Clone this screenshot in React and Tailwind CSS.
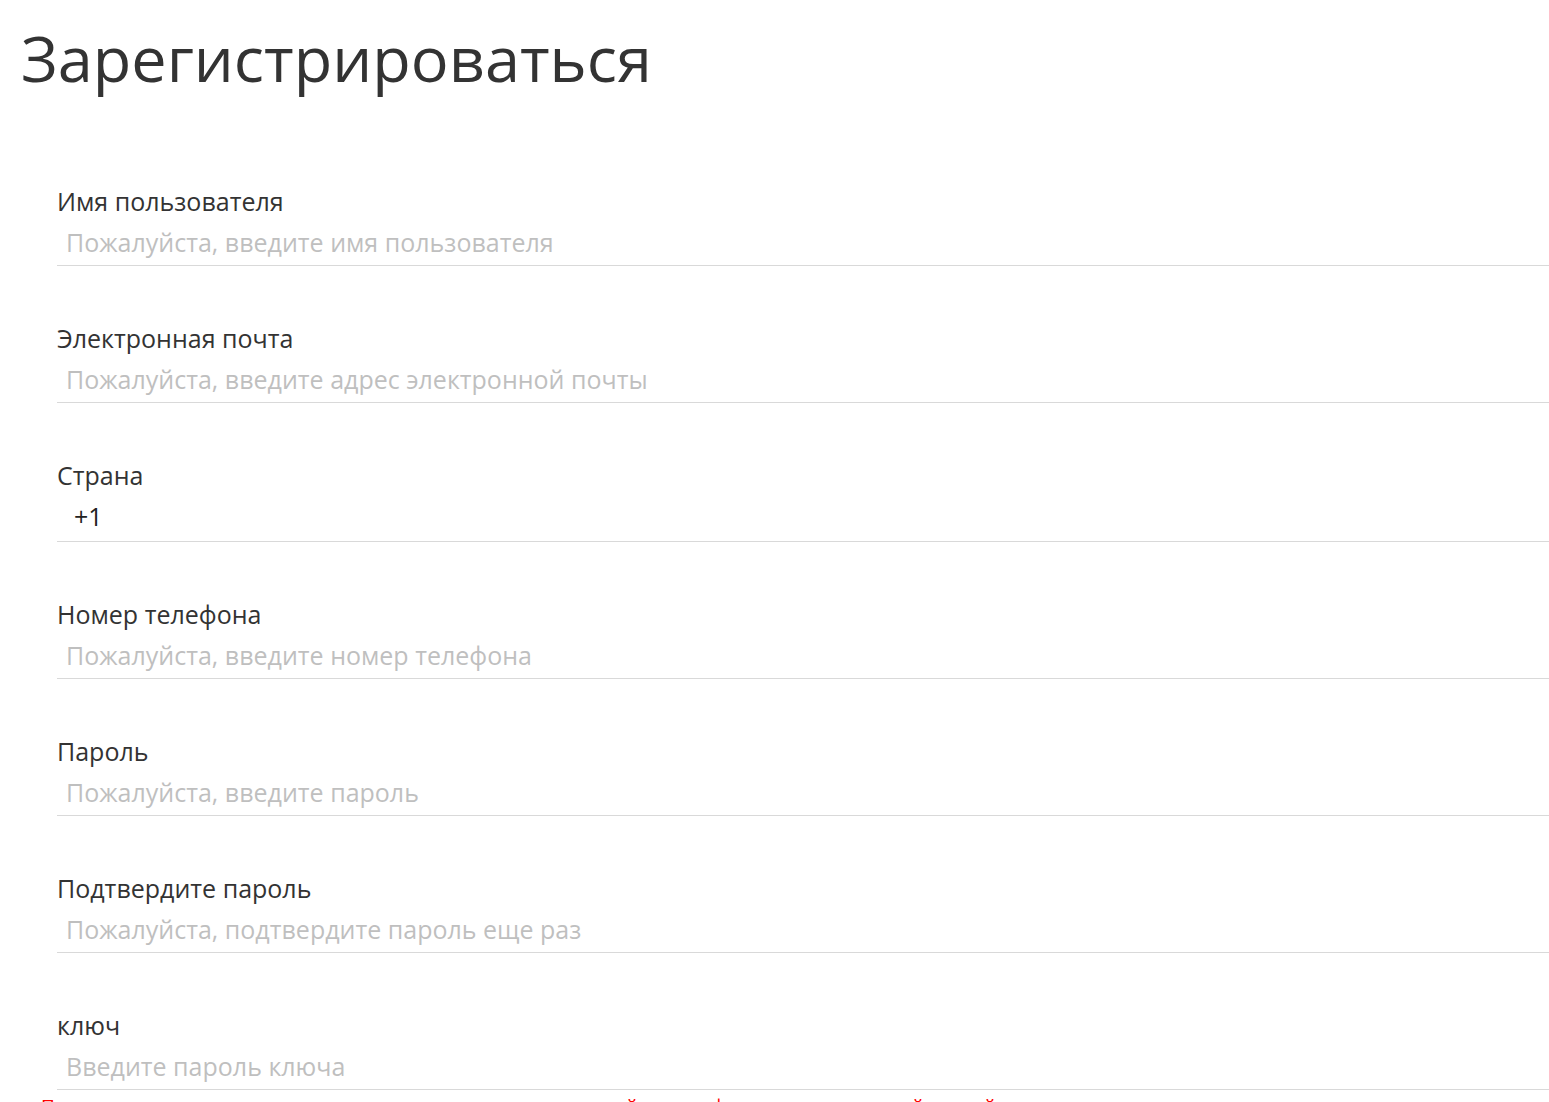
import React, { useState } from 'react';

const fields = [
  { name: 'username', label: 'Имя пользователя', placeholder: 'Пожалуйста, введите имя пользователя', type: 'text' },
  { name: 'email', label: 'Электронная почта', placeholder: 'Пожалуйста, введите адрес электронной почты', type: 'email' },
  { name: 'country', label: 'Страна', select: true },
  { name: 'phone', label: 'Номер телефона', placeholder: 'Пожалуйста, введите номер телефона', type: 'tel' },
  { name: 'password', label: 'Пароль', placeholder: 'Пожалуйста, введите пароль', type: 'password' },
  { name: 'confirm', label: 'Подтвердите пароль', placeholder: 'Пожалуйста, подтвердите пароль еще раз', type: 'password' },
  { name: 'key', label: 'ключ', placeholder: 'Введите пароль ключа', type: 'password' },
];

const Field = ({ field, value, onChange }) => (
  <div className="pt-[54px]">
    <label className="block text-[25px] leading-[36px] text-[#333]">{field.label}</label>
    {field.select ? (
      <div className="h-[49px] flex items-center pl-[17px] border-b border-[#d9d9d9] text-[25px] text-[#222]">
        +1
      </div>
    ) : (
      <input
        type={field.type === 'password' ? 'text' : field.type}
        value={value}
        onChange={(e) => onChange(field.name, e.target.value)}
        placeholder={field.placeholder}
        className="block w-full h-[47px] pl-[9px] border-b border-[#d9d9d9] text-[25px] text-[#333] placeholder:text-[#bfbfbf] outline-none bg-transparent"
      />
    )}
  </div>
);

export default function App() {
  const [form, setForm] = useState({});
  const update = (name, value) => setForm((f) => ({ ...f, [name]: value }));

  return (
    <div className="min-h-screen bg-white overflow-hidden" style={{ fontFamily: '"Open Sans", "Noto Sans", sans-serif' }}>
      <h1 className="pl-[21px] pt-[13px] mb-[26px] text-[63px] leading-[90px] text-[#333] font-normal">Зарегистрироваться</h1>
      <div className="pl-[57px]">
        {fields.map((f) => (
          <Field key={f.name} field={f} value={form[f.name] || ''} onChange={update} />
        ))}
      </div>
      <p className="pl-[41px] pt-[4px] text-[19px] leading-[24px] text-[#f00]">
        Примечание: ключ регистрации выдает админ, свяжитесь с ней по телефону или электронной почтой
      </p>
    </div>
  );
}
